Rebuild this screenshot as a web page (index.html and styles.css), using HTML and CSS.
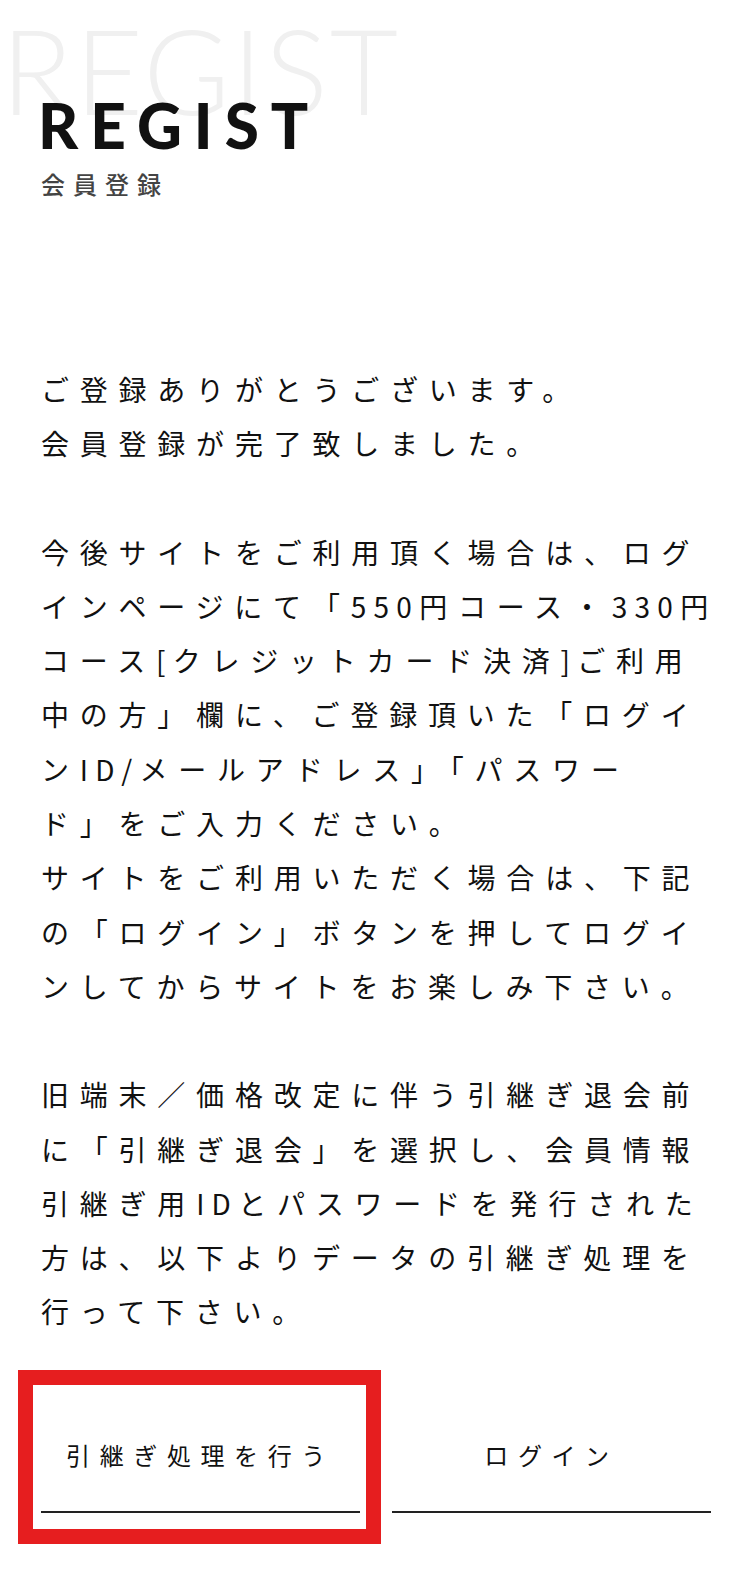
FILE: index.html
```html
<!DOCTYPE html>
<html lang="ja">
<head>
<meta charset="utf-8">
<title>REGIST 会員登録</title>
<link rel="stylesheet" href="styles.css">
</head>
<body>
<main class="page">
  <header class="head">
    <div class="head-bg" aria-hidden="true">REGIST</div>
    <h1 class="head-title">REGIST</h1>
    <p class="head-sub">会員登録</p>
  </header>

  <section class="message">
    <p class="para">ご登録ありがとうございます。<br>会員登録が完了致しました。</p>
    <p class="para">今後サイトをご利用頂く場合は、ログ<br>インページにて「<span class="latin">550</span>円コース・<span class="latin">330</span>円<br>コース<span class="latin">[</span>クレジットカード決済<span class="latin">]</span>ご利用<br>中の方」欄に、ご登録頂いた「ログイ<br>ン<span class="latin">ID/</span>メールアドレス」「パスワー<br>ド」をご入力ください。<br>サイトをご利用いただく場合は、下記<br>の「ログイン」ボタンを押してログイ<br>ンしてからサイトをお楽しみ下さい。</p>
    <p class="para">旧端末／価格改定に伴う引継ぎ退会前<br>に「引継ぎ退会」を選択し、会員情報<br>引継ぎ用<span class="latin">ID</span>とパスワードを発行された<br>方は、以下よりデータの引継ぎ処理を<br>行って下さい。</p>
  </section>

  <nav class="actions">
    <a class="btn btn-marked" href="#">引継ぎ処理を行う<span class="mark" aria-hidden="true"></span></a>
    <a class="btn" href="#">ログイン</a>
  </nav>
</main>
</body>
</html>
```

FILE: styles.css
```css
html, body {
  margin: 0;
  padding: 0;
  background: #ffffff;
}

body {
  font-family: "Noto Sans CJK JP", "Noto Sans", sans-serif;
  color: #111111;
}

.page {
  width: 750px;
  height: 1582px;
  box-sizing: border-box;
  padding: 0 39px 0 41px;
  overflow: hidden;
}

.head {
  position: relative;
  padding-top: 94px;
}

.head-bg {
  position: absolute;
  left: -40px;
  top: 11px;
  font-family: "Lato", "Liberation Sans", sans-serif;
  font-weight: 300;
  font-size: 118px;
  line-height: 1;
  letter-spacing: 2px;
  color: #f0f0f0;
  white-space: nowrap;
  z-index: 0;
}

.head-title {
  position: relative;
  z-index: 1;
  margin: 0 0 0 -3px;
  font-family: "Lato", "Liberation Sans", sans-serif;
  font-weight: 900;
  font-size: 62px;
  line-height: 1;
  letter-spacing: 12px;
  color: #111111;
}

.head-sub {
  position: relative;
  z-index: 1;
  margin: 11px 0 0 0;
  font-size: 24px;
  line-height: 34px;
  font-weight: 500;
  letter-spacing: 8px;
  color: #444444;
}

.message {
  margin-top: 161px;
}

.para {
  margin: 0 0 54px 0;
  font-size: 28px;
  line-height: 54.3px;
  letter-spacing: 0.385em;
  white-space: nowrap;
  color: #111111;
}

.para:last-child {
  margin-bottom: 0;
}

.latin {
  letter-spacing: 0.26em;
}

.actions {
  display: grid;
  grid-template-columns: 1fr 1fr;
  column-gap: 32px;
  margin-top: 46px;
}

.btn {
  position: relative;
  display: flex;
  align-items: center;
  justify-content: center;
  height: 128px;
  box-sizing: border-box;
  padding-top: 14px;
  border-bottom: 2px solid #222222;
  font-size: 24px;
  letter-spacing: 0.4em;
  color: #111111;
  text-decoration: none;
}

.mark {
  position: absolute;
  left: -23px;
  top: -15px;
  width: 363px;
  height: 174px;
  box-sizing: border-box;
  border: 15px solid #e61e1f;
  pointer-events: none;
}
```
